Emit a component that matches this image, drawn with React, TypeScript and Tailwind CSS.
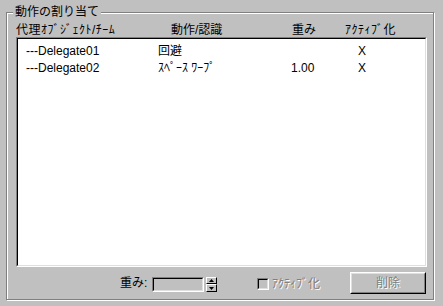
const rows = [
  { name: "---Delegate01", action: "回避", weight: "", active: "X" },
  { name: "---Delegate02", action: "ｽﾍﾟｰｽ ﾜｰﾌﾟ", weight: "1.00", active: "X" },
];

function SpinArrow({ down }: { down?: boolean }) {
  return (
    <svg width="5" height="3" viewBox="0 0 5 3" className={down ? "rotate-180" : ""}>
      <path d="M2.5 0 L5 3 L0 3 Z" fill="#000" />
    </svg>
  );
}

function App() {
  return (
    <div
      className="w-[443px] h-[306px] bg-[#c0c0c0] text-[12px] leading-[14px] text-black pt-[12px] pl-[6px]"
      style={{ fontFamily: "'Liberation Sans', 'Noto Sans CJK JP', sans-serif" }}
    >
      <div className="relative w-[428px] h-[288px] border border-[#808080] shadow-[inset_1px_1px_0_#fff,1px_1px_0_#fff] flex flex-col">
        <span className="absolute -top-[8px] left-[6px] px-[2px] bg-[#c0c0c0]">
          動作の割り当て
        </span>

        <div className="flex pl-[9px] mt-[10px] h-[14px]">
          <span className="w-[155px] tracking-[0.5px]">代理ｵﾌﾞｼﾞｪｸﾄ/ﾁｰﾑ</span>
          <span className="w-[121px]">動作/認識</span>
          <span className="w-[53px]">重み</span>
          <span className="tracking-[0.5px]">ｱｸﾃｨﾌﾞ化</span>
        </div>

        <div className="ml-[9px] w-[411px] h-[230px] border border-t-[#808080] border-l-[#808080] border-b-white border-r-white">
          <div className="h-full bg-white border border-t-black border-l-black border-b-[#dfdfdf] border-r-[#dfdfdf] pt-[3px]">
            {rows.map((r) => (
              <div key={r.name} className="flex pl-[8px] h-[17px] items-center">
                <span className="w-[132px]">{r.name}</span>
                <span className="w-[133px]">{r.action}</span>
                <span className="w-[67px]">{r.weight}</span>
                <span>{r.active}</span>
              </div>
            ))}
          </div>
        </div>

        <div className="flex items-center mt-[5px] h-[22px]">
          <span className="ml-[113px] w-[32px]">重み:</span>
          <div className="w-[52px] h-[15px] mt-[3px] border border-t-[#808080] border-l-[#808080] border-b-white border-r-white">
            <div className="h-full bg-[#c0c0c0] border border-t-black border-l-black border-b-[#dfdfdf] border-r-[#dfdfdf]" />
          </div>
          <div className="ml-[2px] mt-[3px] w-[11px] h-[15px] flex flex-col">
            <div className="h-[7px] bg-[#c0c0c0] border border-t-white border-l-white border-b-black border-r-black flex items-center justify-center">
              <SpinArrow />
            </div>
            <div className="h-[8px] bg-[#c0c0c0] border border-t-white border-l-white border-b-black border-r-black flex items-center justify-center">
              <SpinArrow down />
            </div>
          </div>

          <div className="ml-[40px] mt-[2px] w-[12px] h-[12px] border border-t-[#808080] border-l-[#808080] border-b-white border-r-white">
            <div className="h-full bg-[#c0c0c0] border border-t-black border-l-black border-b-[#dfdfdf] border-r-[#dfdfdf]" />
          </div>
          <span className="ml-[3px] mt-[2px] text-[#808080] [text-shadow:1px_1px_0_#fff]">ｱｸﾃｨﾌﾞ化</span>

          <button
            disabled
            className="ml-auto mr-[7px] w-[76px] h-[22px] border border-t-white border-l-white border-b-black border-r-black bg-[#c0c0c0] p-0"
          >
            <div className="h-full flex items-center justify-center border border-t-[#dfdfdf] border-l-[#dfdfdf] border-b-[#808080] border-r-[#808080] text-[#808080] [text-shadow:1px_1px_0_#fff]">
              削除
            </div>
          </button>
        </div>
      </div>
    </div>
  );
}

export default App;
